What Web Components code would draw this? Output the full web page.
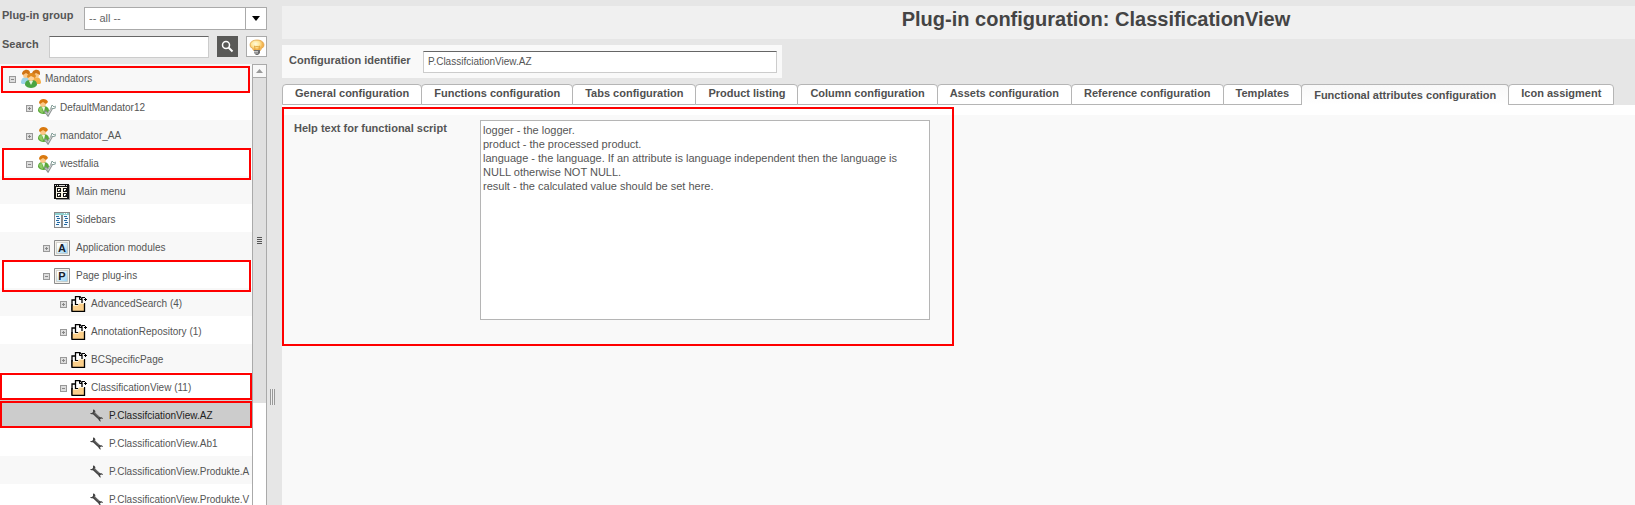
<!DOCTYPE html>
<html lang="en">
<head>
<meta charset="utf-8">
<title>Plug-in configuration</title>
<style>
  body {
    margin: 0;
    height: 100vh;
    overflow: hidden;
    background: #e6e6e6;
    color: #555;
    font-family: "Liberation Sans", Arial, sans-serif;
    font-size: 11px;
  }
</style>
</head>
<body>
<app-layout>
  <plugin-filter slot="side"></plugin-filter>
  <plugin-tree slot="side">
    <tree-row level="0" icon="mandators" toggle="minus" mark="root">Mandators</tree-row>
    <tree-row level="1" icon="mandator" toggle="plus">DefaultMandator12</tree-row>
    <tree-row level="1" icon="mandator" toggle="plus">mandator_AA</tree-row>
    <tree-row level="1" icon="mandator" toggle="minus" mark="loose">westfalia</tree-row>
    <tree-row level="2" icon="menu">Main menu</tree-row>
    <tree-row level="2" icon="sidebars">Sidebars</tree-row>
    <tree-row level="2" icon="modules" toggle="plus">Application modules</tree-row>
    <tree-row level="2" icon="plugins" toggle="minus" mark="loose">Page plug-ins</tree-row>
    <tree-row level="3" icon="folder" toggle="plus">AdvancedSearch (4)</tree-row>
    <tree-row level="3" icon="folder" toggle="plus">AnnotationRepository (1)</tree-row>
    <tree-row level="3" icon="folder" toggle="plus">BCSpecificPage</tree-row>
    <tree-row level="3" icon="folder" toggle="minus" mark="tight">ClassificationView (11)</tree-row>
    <tree-row level="4" icon="wrench" mark="tight" selected>P.ClassifciationView.AZ</tree-row>
    <tree-row level="4" icon="wrench">P.ClassificationView.Ab1</tree-row>
    <tree-row level="4" icon="wrench">P.ClassificationView.Produkte.A</tree-row>
    <tree-row level="4" icon="wrench">P.ClassificationView.Produkte.V</tree-row>
  </plugin-tree>

  <page-title>Plug-in configuration: ClassificationView</page-title>
  <config-identifier value="P.ClassifciationView.AZ"></config-identifier>
  <tab-bar>
    <tab-item>General configuration</tab-item>
    <tab-item>Functions configuration</tab-item>
    <tab-item>Tabs configuration</tab-item>
    <tab-item>Product listing</tab-item>
    <tab-item>Column configuration</tab-item>
    <tab-item>Assets configuration</tab-item>
    <tab-item>Reference configuration</tab-item>
    <tab-item>Templates</tab-item>
    <tab-item active>Functional attributes configuration</tab-item>
    <tab-item>Icon assigment</tab-item>
  </tab-bar>
  <script-help></script-help>
</app-layout>

<script>
const icons = {
  mandators: `<svg width="20" height="20" viewBox="0 0 20 20">
    <path d="M0 14c0-4 2-6 5-6s4 2 4 5l-2 2H1z" fill="#9fd3e8"/>
    <path d="M11 13c0-3 1-5 4-5s5 2 5 6l-1 1h-6z" fill="#f5b04a"/>
    <circle cx="5" cy="6" r="3" fill="#fbc98a"/>
    <path d="M1 5c0-5 8-6 8-1l-1 2-3-2-3 2z" fill="#cf7415"/>
    <circle cx="15" cy="6" r="3" fill="#fbc98a"/>
    <path d="M11 5c0-5 8-6 8-1v2l-4-2-3 2z" fill="#cf7415"/>
    <path d="M4 16c0-4 2-5 6-5s6 1 6 5c-2 4-10 4-12 0z" fill="#4ba543"/>
    <path d="M8 12h4l-2 4z" fill="#e6f3df"/>
    <circle cx="10" cy="9" r="3" fill="#ffd298"/>
    <path d="M6 8c0-5 8-5 9-1l-1 2-4-2-3 2z" fill="#e08a1e"/>
  </svg>`,
  mandator: `<svg width="18" height="18" viewBox="0 0 18 18">
    <path d="M0 12c0-4 2-5 5-5s6 1 6 5c-2 4-9 4-11 0z" fill="#5aa83a"/>
    <path d="M1 11c0-2 1-3 3-3l1 6c-2 0-3-1-4-3z" fill="#8fcc62"/>
    <path d="M4 8h3l-1 5z" fill="#eef7e6"/>
    <circle cx="5" cy="5" r="3" fill="#fbc98a"/>
    <path d="M1 4c0-5 8-5 9-1L8 5 5 3 2 5z" fill="#d9790f"/>
    <path d="M7 12l3 4 4-7" fill="none" stroke="#8d9292" stroke-width="2.500"/>
    <path d="M7.500 13l2.500 2.500 3.500-6" fill="none" stroke="#d5d9d9" stroke-width="1"/>
    <path d="M13 9l1-3 2 2 2-1M14 9.500h2l2-1" fill="none" stroke="#85a09a" stroke-width="1"/>
  </svg>`,
  menu: `<svg width="16" height="16" viewBox="0 0 16 16" shape-rendering="crispEdges">
    <path d="M0 0h15v15H0z" fill="#111"/><path d="M15 1h1v15H2v-1h13z" fill="#999"/>
    <path d="M1 1h1v1H1zM3 1h1v1H3zM5 1h6v1H5zM12 1h1v1h-1z" fill="#ddd"/>
    <path d="M2 3h11v11H2z" fill="#faf6e4"/>
    <path d="M3 4h4v4H3zM9 4h4v4H9zM3 9h4v4H3zM9 9h4v4H9z" fill="#111"/>
    <path d="M4 5h2v2H4zM10 5h2v2h-2zM4 10h2v2H4zM10 10h2v2h-2z" fill="#fff"/>
    <path d="M5 6h1v1H5zM11 6h1v1h-1zM5 11h1v1H5zM11 11h1v1h-1z" fill="#555"/>
  </svg>`,
  sidebars: `<svg width="16" height="16" viewBox="0 0 16 16" shape-rendering="crispEdges">
    <path d="M0 0h16v16H0z" fill="#8a8a8a"/><path d="M1 1h14v2H1z" fill="#8fd0cf"/>
    <path d="M10 1h1v1h-1zM12 1h1v1h-1z" fill="#fff"/>
    <path d="M1 3h6v12H1zM9 3h6v12H9z" fill="#f2faff"/>
    <path d="M2 4h3v1H2zM3 6h3v1H3zM2 8h3v1H2zM3 10h3v1H3zM2 12h3v1H2zM10 4h3v1h-3zM11 6h3v1h-3zM10 8h3v1h-3zM11 10h3v1h-3zM10 12h3v1h-3z" fill="#2467a0"/>
  </svg>`,
  modules: letterIcon("A"),
  plugins: letterIcon("P"),
  folder: `<svg width="16" height="16" viewBox="0 0 16 16">
    <path d="M1 4h4v10H1z" fill="#fff" stroke="#000" stroke-width="1.300"/>
    <path d="M4.500.7h4.500l2 2v6H4.500z" fill="#fff" stroke="#000" stroke-width="1.300"/>
    <path d="M8.500 1v2.500H11" fill="none" stroke="#000"/>
    <path d="M1 9.500h6l1-2h5.500v7.800H1z" fill="#fbcf8a"/>
    <path d="M1 8v7.300h12.500V7" fill="none" stroke="#000" stroke-width="1.300"/>
    <path d="M2 9.500h5l1.500-2H13" fill="none" stroke="#fff0d0"/>
    <path d="M11 1.500h3M14.500 2v3M13 3.500h3" fill="none" stroke="#000"/>
  </svg>`,
  wrench: `<svg width="16" height="16" viewBox="0 0 16 16">
    <path d="M4 4.500l7 6.500" stroke="#444" stroke-width="2.600"/>
    <path d="M4 1.500c2 0 3 2 2 3.500S2 7 1 5l2 0 1-1z" fill="#444"/>
    <path d="M12 13.500c-2 0-3-2-2-3.500s4-1 4 1l-2-.5-1 1z" fill="#444"/>
    <path d="M5 4.500l5 4.800" stroke="#999" stroke-width=".6"/>
  </svg>`
}

function letterIcon(letter) {
  return `<svg width="16" height="16" viewBox="0 0 16 16">
    <defs><linearGradient id="sky" x2="1" y2="1"><stop offset=".2" stop-color="#fff"/><stop offset="1" stop-color="#8fd0f5"/></linearGradient></defs>
    <path d="M.5.5h15v15H.5z" fill="#f4f2ec" stroke="#8c8c8c"/>
    <path d="M2.500 2.500h11v11h-11z" fill="url(#sky)" stroke="#b5b2a8" stroke-dasharray="1 1"/>
    <text x="8" y="12" text-anchor="middle" font-family="Liberation Sans" font-size="11" font-weight="bold" fill="#15202c">${letter}</text>
  </svg>`
}

class AppLayout extends HTMLElement {
  constructor() {
    super();
    this.attachShadow({ mode: "open" }).innerHTML = `
<style>
  :host {
    display: grid;
    grid-template-columns: 267px 15px minmax(0, 1fr);
    height: 100%;
  }
  aside {
    display: flex;
    flex-direction: column;
    min-height: 0;
  }
  .splitter {
    display: grid;
    grid-template-rows: 77fr 23fr;
  }
  .splitter i {
    grid-row: 2;
    width: 5px;
    height: 16px;
    margin-left: 3px;
    background: repeating-linear-gradient(90deg, #999 0 1px, #eee 1px 2px);
  }
  main {
    display: flex;
    flex-direction: column;
    gap: 6px;
    padding-top: 6px;
  }
</style>
<aside><slot name="side"></slot></aside>
<div class="splitter"><i></i></div>
<main><slot></slot></main>
`;
  }
}

class PluginFilter extends HTMLElement {
  constructor() {
    super();
    this.attachShadow({ mode: "open" }).innerHTML = `
<style>
  :host {
    display: flex;
    flex-direction: column;
    gap: 6px;
    padding: 7px 0 6px 2px;
  }
  .line {
    display: flex;
  }
  label {
    padding-top: 2px;
    font-weight: bold;
    line-height: 13px;
  }
  .group {
    width: 82px;
  }
  .search {
    width: 47px;
  }
  select {
    appearance: none;
    flex: 1;
    height: 23px;
    padding: 0 26px 2px 4px;
    border: 1px solid #aaa;
    border-radius: 0;
    color: #666;
    font: inherit;
    background: linear-gradient(#aaa, #aaa) right 20px top / 1px 100% no-repeat, #fff;
  }
  .picker {
    display: flex;
    flex: 1;
    position: relative;
  }
  .picker svg {
    position: absolute;
    right: 7px;
    top: 9px;
    pointer-events: none;
  }
  input {
    box-sizing: border-box;
    flex: 1;
    min-width: 0;
    height: 22px;
    margin-right: 8px;
    padding: 0 4px;
    border: 1px solid #ccc;
    border-top-color: #666;
    font: inherit;
  }
  button {
    display: grid;
    place-items: center;
    box-sizing: border-box;
    width: 21px;
    height: 21px;
    padding: 0;
    border: 0;
    background: #595957;
  }
  .hint {
    margin-left: 8px;
    border: 1px solid #aaa;
    background: #fff;
  }
</style>
<div class="line">
  <label class="group" for="group">Plug-in group</label>
  <span class="picker">
    <select id="group"><option>-- all --</option></select>
    <svg width="8" height="5" viewBox="0 0 8 5"><path d="M0 0h8L4 5z" fill="#000"/></svg>
  </span>
</div>
<div class="line">
  <label class="search" for="search">Search</label>
  <input id="search" type="text">
  <button type="button" aria-label="Search">
    <svg width="13" height="13" viewBox="0 0 13 13"><circle cx="5" cy="5" r="3.500" fill="none" stroke="#fff" stroke-width="1.500"/><path d="M7.500 7.500l4 4" stroke="#fff" stroke-width="2"/></svg>
  </button>
  <button class="hint" type="button" aria-label="Hint">
    <svg width="16" height="16" viewBox="0 0 16 16">
      <defs><radialGradient id="glow" cx=".4" cy=".35"><stop offset="0" stop-color="#fffbe0"/><stop offset=".6" stop-color="#ffe596"/><stop offset="1" stop-color="#f4b552"/></radialGradient></defs>
      <path d="M1 6C1 3 4 1 8 1s7 2 7 5c0 3-3 3-4 6H5C4 9 1 9 1 6z" fill="url(#glow)" stroke="#dd9d45" stroke-width=".7"/>
      <path d="M6 11l-.5-4 1.500 1 1-1 1 1 1.500-1L10 11" fill="none" stroke="#d99a2e" stroke-width=".7"/>
      <path d="M5 11h6v3l-2 2H7l-2-2z" fill="#6d6d6d"/>
      <path d="M5 12.500h4M5 14h4" stroke="#ddd" stroke-width=".8"/>
    </svg>
  </button>
</div>
`;
  }
}

class PluginTree extends HTMLElement {
  constructor() {
    super();
    this.attachShadow({ mode: "open" }).innerHTML = `
<style>
  :host {
    display: grid;
    grid-template-columns: minmax(0, 1fr) 15px;
    flex: 1;
    min-height: 0;
    background: #fff;
  }
  .rows {
    overflow: hidden;
  }
  ::slotted(:nth-of-type(odd)) {
    background: #f8f8f8;
  }
  .scroll {
    display: flex;
    flex-direction: column;
    box-sizing: border-box;
    border: 1px solid #aaa;
    border-width: 1px 1px 0;
  }
  .up {
    display: grid;
    place-items: center;
    height: 12px;
    border-bottom: 1px solid #aaa;
    background: #f8f8f8;
  }
  .thumb {
    display: grid;
    place-items: center;
    flex: 76;
    background: #e0e0e0;
  }
  .rest {
    flex: 24;
  }
</style>
<div class="rows" role="tree"><slot></slot></div>
<div class="scroll">
  <div class="up"><svg width="7" height="4" viewBox="0 0 7 4"><path d="M3.500 0L7 4H0z" fill="#999"/></svg></div>
  <div class="thumb"><svg width="5" height="7" viewBox="0 0 5 7" shape-rendering="crispEdges"><path d="M0 0h5v1H0zM0 2h5v1H0zM0 4h5v1H0zM0 6h5v1H0z" fill="#555"/></svg></div>
  <div class="rest"></div>
</div>
`;
  }
}

class TreeRow extends HTMLElement {
  constructor() {
    super();
    this.attachShadow({ mode: "open" }).innerHTML = `
<style>
  :host {
    display: flex;
    align-items: center;
    position: relative;
    box-sizing: border-box;
    height: 28px;
    padding-top: 3px;
    padding-left: calc(9px + 17px * var(--level));
    font-size: 10px;
    white-space: nowrap;
  }
  :host([level="0"]) {
    padding-top: 1px;
  }
  :host([selected]) {
    background: #ccc !important;
    color: #222;
  }
  :host([mark])::after {
    content: "";
    position: absolute;
    inset: 1px 0 0;
    border: 2px solid #f00;
    pointer-events: none;
    z-index: 1;
  }
  :host([mark="root"])::after {
    inset: 2px 2px -1px 1px;
  }
  :host([mark="loose"])::after {
    inset: 0 1px -4px 2px;
  }
  button {
    width: 7px;
    height: 7px;
    margin: 2px 5px 0 0;
    padding: 0;
    border: 0;
    background: none;
    line-height: 0;
  }
  .icon {
    flex: none;
    margin-right: 4px;
    line-height: 0;
  }
  :host([level="2"]) button,
  :host([level="3"]) button {
    margin-right: 4px;
  }
  :host([level="2"]) .icon {
    margin-right: 6px;
  }
  a {
    color: inherit;
    text-decoration: none;
  }
</style>
<button type="button" aria-label="Toggle"></button>
<span class="icon"></span>
<a href="#"><slot></slot></a>
`;
    const toggle = this.getAttribute("toggle")
    const button = this.shadowRoot.querySelector("button")
    this.style.setProperty("--level", this.getAttribute("level"))
    this.shadowRoot.querySelector(".icon").innerHTML = icons[this.getAttribute("icon")]

    if (toggle) {
      const sign = toggle === "plus" ? "M2 3h3v1H2zM3 2h1v3H3z" : "M2 3h3v1H2z"
      button.innerHTML = `<svg width="7" height="7" viewBox="0 0 7 7" shape-rendering="crispEdges"><path d="M0 0h7v7H0z" fill="#999"/><path d="M1 1h5v5H1z" fill="#ddd"/><path d="${sign}" fill="#888"/></svg>`
    } else {
      button.style.visibility = "hidden"
    }
  }
}

class PageTitle extends HTMLElement {
  constructor() {
    super();
    this.attachShadow({ mode: "open" }).innerHTML = `
<style>
  :host {
    display: block;
    height: 33px;
    padding-left: 275px;
    background: #f0f0f0;
  }
  h1 {
    margin: 0;
    color: #444;
    font-size: 20px;
    line-height: 26px;
    text-align: center;
  }
</style>
<h1><slot></slot></h1>
`;
  }
}

class ConfigIdentifier extends HTMLElement {
  constructor() {
    super();
    this.attachShadow({ mode: "open" }).innerHTML = `
<style>
  :host {
    display: grid;
    grid-template-columns: 134px minmax(0, 1fr);
    box-sizing: border-box;
    max-width: 500px;
    padding: 6px 5px 5px 7px;
    background: #f9f9f9;
  }
  label {
    font-weight: bold;
    line-height: 18px;
  }
  input {
    box-sizing: border-box;
    height: 22px;
    padding: 0 4px 2px;
    border: 1px solid #ccc;
    border-top-color: #666;
    color: #555;
    font: inherit;
    font-size: 10px;
  }
</style>
<label for="identifier">Configuration identifier</label>
<input id="identifier" type="text">
`;
    this.shadowRoot.querySelector("input").value = this.getAttribute("value")
  }
}

class TabBar extends HTMLElement {
  constructor() {
    super();
    this.attachShadow({ mode: "open" }).innerHTML = `
<style>
  :host {
    display: flex;
    padding-right: 20px;
  }
</style>
<slot></slot>
`;
    this.setAttribute("role", "tablist")
  }
}

class TabItem extends HTMLElement {
  constructor() {
    super();
    this.attachShadow({ mode: "open" }).innerHTML = `
<style>
  :host {
    display: block;
  }
  :host(:not(:last-of-type)) {
    margin-right: -1px;
  }
  button {
    display: block;
    height: 21px;
    padding: 0 12px 3px;
    border: 1px solid #b5b5b5;
    border-radius: 4px 4px 0 0;
    background: #fff;
    color: #505050;
    font: bold 11px "Liberation Sans", Arial, sans-serif;
    white-space: nowrap;
  }
  :host([active]) button {
    padding-bottom: 1px;
    border-bottom: 0;
    background: linear-gradient(#f8f8f8, #fff);
  }
</style>
<button type="button" role="tab"><slot></slot></button>
`;
  }
}

class ScriptHelp extends HTMLElement {
  constructor() {
    super();
    this.attachShadow({ mode: "open" }).innerHTML = `
<style>
  :host {
    display: block;
    flex: 1;
    margin-top: -6px;
    padding-top: 2px;
    background: linear-gradient(#fff 10px, #f9f9f9 10px);
  }
  form {
    display: grid;
    grid-template-columns: 186px minmax(0, 1fr);
    box-sizing: border-box;
    max-width: 672px;
    padding: 11px 22px 24px 10px;
    border: 2px solid #f00;
  }
  label {
    font-weight: bold;
    line-height: 16px;
  }
  textarea {
    box-sizing: border-box;
    height: 200px;
    padding: 2px;
    border: 1px solid #b5b5b5;
    color: #555;
    font: 11px/14px "Liberation Sans", Arial, sans-serif;
    resize: none;
  }
</style>
<form>
  <label for="help">Help text for functional script</label>
  <textarea id="help">logger - the logger.
product - the processed product.
language - the language. If an attribute is language independent then the language is NULL otherwise NOT NULL.
result - the calculated value should be set here.</textarea>
</form>
`;
  }
}

window.customElements.define("app-layout", AppLayout);
window.customElements.define("plugin-filter", PluginFilter);
window.customElements.define("plugin-tree", PluginTree);
window.customElements.define("tree-row", TreeRow);
window.customElements.define("page-title", PageTitle);
window.customElements.define("config-identifier", ConfigIdentifier);
window.customElements.define("tab-bar", TabBar);
window.customElements.define("tab-item", TabItem);
window.customElements.define("script-help", ScriptHelp);
</script>
</body>
</html>
